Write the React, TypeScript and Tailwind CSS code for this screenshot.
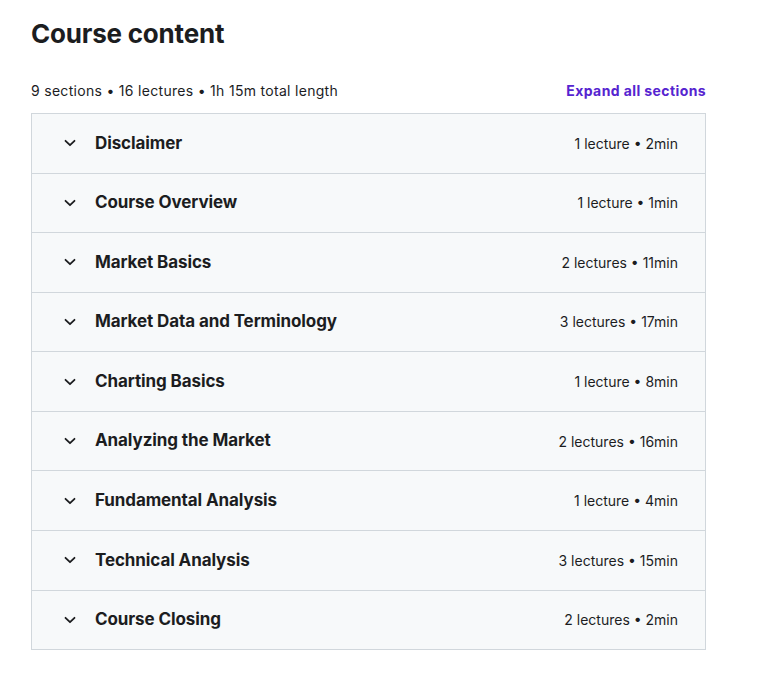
const sections = [
  { title: "Disclaimer", meta: "1 lecture • 2min" },
  { title: "Course Overview", meta: "1 lecture • 1min" },
  { title: "Market Basics", meta: "2 lectures • 11min" },
  { title: "Market Data and Terminology", meta: "3 lectures • 17min" },
  { title: "Charting Basics", meta: "1 lecture • 8min" },
  { title: "Analyzing the Market", meta: "2 lectures • 16min" },
  { title: "Fundamental Analysis", meta: "1 lecture • 4min" },
  { title: "Technical Analysis", meta: "3 lectures • 15min" },
  { title: "Course Closing", meta: "2 lectures • 2min" },
]

function Chevron() {
  return (
    <svg width="12" height="8" viewBox="0 0 12 8" fill="none" className="shrink-0">
      <path d="M1.5 1.8 6 6.2l4.5-4.4" stroke="#1c1d1f" strokeWidth="1.8" strokeLinecap="round" strokeLinejoin="round" />
    </svg>
  )
}

export default function App() {
  return (
    <div className="min-h-screen bg-white text-[#1c1d1f] font-['Inter','Liberation_Sans',sans-serif]">
      <div className="w-[675px] ml-[31px] pt-[17px]">
        <h2 className="text-[26px] leading-[34px] font-bold tracking-[-0.2px]">Course content</h2>
        <div className="flex items-end justify-between mt-[30px] mb-[12px]">
          <span className="text-[14px] leading-[20px] tracking-[0.3px]">9 sections • 16 lectures • 1h 15m total length</span>
          <button className="text-[14px] leading-[20px] font-bold tracking-[0.4px] text-[#5624d0]">Expand all sections</button>
        </div>
        <div className="border border-[#d1d7dc] bg-[#f7f9fa]">
          {sections.map((s, i) => (
            <div
              key={s.title}
              className={`flex items-center pl-[32px] pr-[27px] ${i > 0 ? "h-[59.6px] border-t border-[#d1d7dc]" : "h-[58.5px]"}`}
            >
              <Chevron />
              <span className="ml-[19px] text-[17px] font-bold tracking-[-0.1px] flex-1">{s.title}</span>
              <span className="text-[14px]">{s.meta}</span>
            </div>
          ))}
        </div>
      </div>
    </div>
  )
}
